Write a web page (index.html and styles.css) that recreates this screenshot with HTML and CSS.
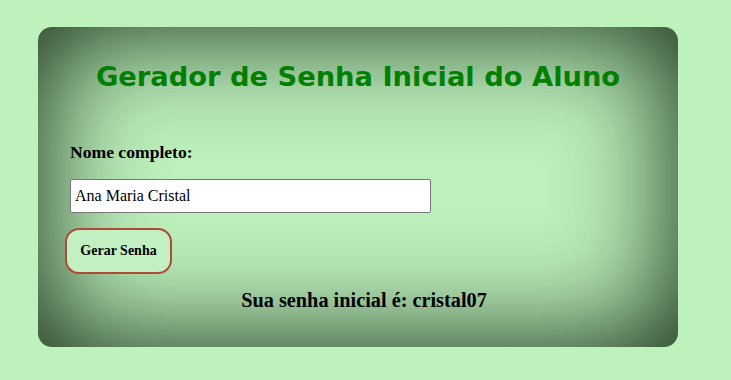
FILE: index.html
```html
<!DOCTYPE html>
<html lang="pt">
<head>
<meta charset="utf-8">
<title>Gerador de Senha Inicial do Aluno</title>
<link rel="stylesheet" href="styles.css">
</head>
<body>
<main class="card">
  <h1 class="title">Gerador de Senha Inicial do Aluno</h1>
  <label class="label" for="nome">Nome completo:</label>
  <input class="field" id="nome" type="text" value="Ana Maria Cristal">
  <button class="btn" type="button">Gerar Senha</button>
  <p class="result">Sua senha inicial é: cristal07</p>
</main>
</body>
</html>
```

FILE: styles.css
```css
html, body {
  margin: 0;
  padding: 0;
  background: #bdf2bd;
}
body {
  padding: 27px 0 0 38px;
  font-family: "Liberation Serif", "Times New Roman", serif;
  color: #000;
}
.card {
  width: 640px;
  height: 320px;
  box-sizing: border-box;
  border-radius: 14px;
  background: #bdf0bd;
  box-shadow: inset 0 0 110px 6px rgba(15, 35, 15, 0.95);
  padding: 35px 32px 0 32px;
  display: flex;
  flex-direction: column;
  align-items: flex-start;
}
.title {
  align-self: stretch;
  margin: 0;
  text-align: center;
  font-family: "DejaVu Sans", Verdana, sans-serif;
  font-weight: bold;
  font-size: 27.3px;
  line-height: 30px;
  color: #008000;
}
.label {
  margin-top: 50px;
  font-weight: bold;
  font-size: 17.6px;
  line-height: 20px;
}
.field {
  margin-top: 17px;
  width: 361px;
  height: 34px;
  box-sizing: border-box;
  border: 1px solid #767676;
  border-radius: 2px;
  padding: 0 4px;
  font-family: "Liberation Serif", "Times New Roman", serif;
  font-size: 16px;
  background: #fff;
  color: #000;
}
.btn {
  margin: 15px 0 0 -5px;
  width: 107px;
  height: 46px;
  border: 2px solid #b04a34;
  border-radius: 14px;
  background: #c3f0c3;
  font-family: "Liberation Serif", "Times New Roman", serif;
  font-weight: bold;
  font-size: 14px;
  color: #000;
  padding: 0;
}
.result {
  align-self: stretch;
  margin: 15px 0 0 12px;
  text-align: center;
  font-weight: bold;
  font-size: 20.3px;
  line-height: 22px;
}
```
